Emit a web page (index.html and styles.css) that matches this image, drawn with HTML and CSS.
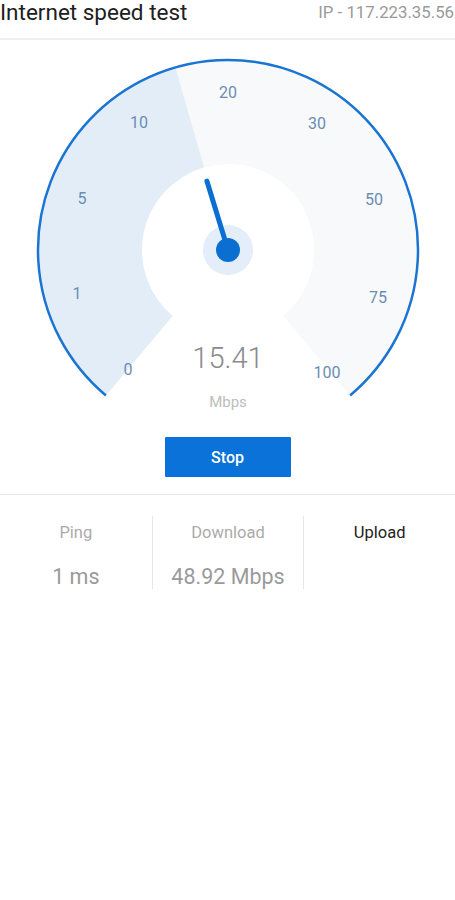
FILE: index.html
```html
<!DOCTYPE html>
<html>
<head>
<meta charset="utf-8">
<link rel="stylesheet" href="styles.css">
</head>
<body>
<header class="top">
  <div class="title">Internet speed test</div>
  <div class="ip">IP - 117.223.35.56</div>
</header>
<section class="gauge-wrap">
  <svg class="gauge" width="455" height="380" viewBox="0 0 455 380">
    <path class="fill-done" d="M 105.9 355.5 A 190 190 0 0 1 175.6 27.4 L 204.3 127.3 A 86 86 0 0 0 172.7 275.9 Z"/>
    <path class="fill-rest" d="M 175.6 27.4 A 190 190 0 0 1 350.1 355.5 L 283.3 275.9 A 86 86 0 0 0 204.3 127.3 Z"/>
    <path class="rim" d="M 105.9 355.5 A 190 190 0 1 1 350.1 355.5"/>
    <g class="ticks">
      <text x="128" y="329">0</text>
      <text x="77" y="253">1</text>
      <text x="82" y="158">5</text>
      <text x="139" y="82">10</text>
      <text x="228" y="52">20</text>
      <text x="317" y="83">30</text>
      <text x="374" y="159">50</text>
      <text x="378" y="257">75</text>
      <text x="327" y="332">100</text>
    </g>
    <circle class="halo" cx="228" cy="210" r="25"/>
    <line class="needle" x1="228" y1="210" x2="206.9" y2="141.1"/>
    <circle class="hub" cx="228" cy="210" r="12"/>
    <text class="speed" x="228" y="318">15.41</text>
    <text class="unit" x="228" y="362">Mbps</text>
  </svg>
</section>
<div class="actions">
  <button class="stop">Stop</button>
</div>
<section class="stats">
  <div class="stat">
    <div class="label">Ping</div>
    <div class="value">1 ms</div>
  </div>
  <div class="stat">
    <div class="label">Download</div>
    <div class="value">48.92 Mbps</div>
  </div>
  <div class="stat">
    <div class="label active">Upload</div>
    <div class="value"></div>
  </div>
</section>
</body>
</html>
```
FILE: styles.css
```css
html, body {
  margin: 0;
  padding: 0;
  background: #ffffff;
  font-family: Roboto, "Noto Sans", "Liberation Sans", sans-serif;
  overflow: hidden;
}

.top {
  display: flex;
  justify-content: space-between;
  align-items: flex-start;
  height: 38px;
  border-bottom: 2px solid #efefef;
}

.title {
  font-size: 22.5px;
  line-height: 24px;
  color: #202020;
  white-space: nowrap;
}

.ip {
  font-size: 16.8px;
  line-height: 24px;
  color: #9a9a9a;
  white-space: nowrap;
  flex-shrink: 0;
  padding-right: 1px;
}

.gauge-wrap {
  display: block;
  height: 380px;
}

.gauge {
  display: block;
}

.fill-done {
  fill: #e3edf8;
}

.fill-rest {
  fill: #f8f9fa;
}

.rim {
  fill: none;
  stroke: #1a74d1;
  stroke-width: 2.5;
}

.ticks text {
  font-size: 16px;
  fill: #6a8db4;
  text-anchor: middle;
  dominant-baseline: central;
}

.halo {
  fill: #e3eefa;
}

.hub {
  fill: #0b6fd2;
}

.needle {
  stroke: #0b6fd2;
  stroke-width: 5;
  stroke-linecap: round;
}

.speed {
  font-size: 29px;
  font-weight: 300;
  fill: #8a8a8a;
  text-anchor: middle;
  dominant-baseline: central;
}

.unit {
  font-size: 15px;
  fill: #bdbdbd;
  text-anchor: middle;
  dominant-baseline: central;
}

.actions {
  display: flex;
  justify-content: center;
  padding-top: 17px;
  padding-bottom: 17px;
  border-bottom: 1px solid #e8e8e8;
}

.stop {
  width: 126px;
  height: 40px;
  border: none;
  border-radius: 1px;
  background: #0a72d8;
  color: #ffffff;
  font-family: Roboto, "Noto Sans", sans-serif;
  font-size: 16px;
  font-weight: 500;
  padding: 0;
}

.stats {
  display: grid;
  grid-template-columns: repeat(3, 1fr);
  padding-top: 21px;
}

.stat {
  display: flex;
  flex-direction: column;
  align-items: center;
  height: 73px;
  padding-top: 7px;
  box-sizing: border-box;
}

.stat + .stat {
  border-left: 1px solid #e6e6e6;
}

.label {
  font-size: 16.5px;
  line-height: 20px;
  color: #ababab;
}

.label.active {
  color: #222222;
}

.value {
  font-size: 21.5px;
  line-height: 24px;
  margin-top: 22px;
  color: #9a9a9a;
}
```
